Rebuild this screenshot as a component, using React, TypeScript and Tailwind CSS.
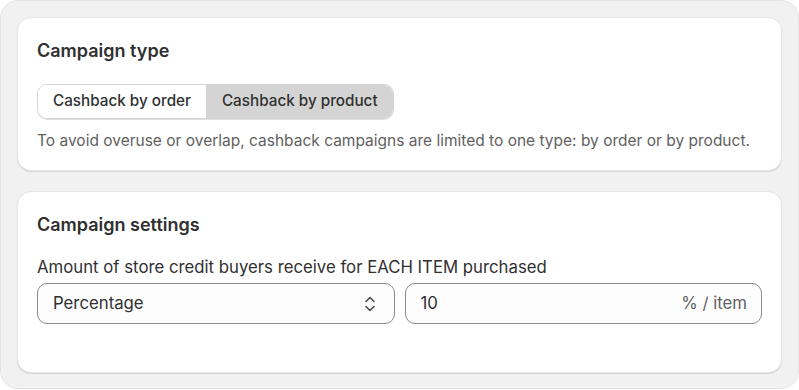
import React, { useState } from 'react';

function SelectArrows() {
  return (
    <svg width="14" height="20" viewBox="0 0 14 20" fill="none" className="text-[#4a4a4a]">
      <path d="M3 7.5L7 3.5L11 7.5" stroke="currentColor" strokeWidth="1.6" strokeLinecap="round" strokeLinejoin="round" />
      <path d="M3 12.5L7 16.5L11 12.5" stroke="currentColor" strokeWidth="1.6" strokeLinecap="round" strokeLinejoin="round" />
    </svg>
  );
}

export default function App() {
  const [type, setType] = useState<'order' | 'product'>('product');
  const [amount, setAmount] = useState('10');

  return (
    <div className="w-[799px] h-[390px] bg-white font-['Inter',sans-serif] text-[#303030]">
      <div className="w-[799px] h-[389px] rounded-[18px] border border-[#e3e3e3] bg-[#f1f1f1] p-4 pb-[15px] flex flex-col gap-[20px]">
        <div className="rounded-[14px] bg-white border border-[#e6e6e6] shadow-[0_1px_1px_rgba(0,0,0,0.12)] px-[19px] pt-[22px] pb-[18px]">
          <h2 className="text-[18px] font-semibold leading-[22px]">Campaign type</h2>
          <div className="mt-[22px] inline-flex rounded-[10px] border border-[#d4d4d4] shadow-[0_1px_0_rgba(0,0,0,0.12)] overflow-hidden">
            <button
              onClick={() => setType('order')}
              className={`h-[33px] px-[15px] text-[15.25px] font-medium ${type === 'order' ? 'bg-[#d4d4d4]' : 'bg-white'}`}
            >
              Cashback by order
            </button>
            <button
              onClick={() => setType('product')}
              className={`h-[33px] px-[15px] text-[15.25px] font-medium border-l border-[#d4d4d4] ${type === 'product' ? 'bg-[#d4d4d4]' : 'bg-white'}`}
            >
              Cashback by product
            </button>
          </div>
          <p className="mt-[11px] text-[15.5px] leading-[22px] text-[#616161]">
            To avoid overuse or overlap, cashback campaigns are limited to one type: by order or by product.
          </p>
        </div>

        <div className="flex-1 rounded-[14px] bg-white border border-[#e6e6e6] shadow-[0_1px_1px_rgba(0,0,0,0.12)] px-[19px] pt-[22px]">
          <h2 className="text-[18px] font-semibold leading-[22px]">Campaign settings</h2>
          <label className="block mt-[19px] text-[16.75px] leading-[24px]">
            Amount of store credit buyers receive for EACH ITEM purchased
          </label>
          <div className="mt-[4px] grid grid-cols-2 gap-[10px]">
            <div className="h-[41px] rounded-[10px] border border-[#8a8a8a] bg-[#fdfdfd] flex items-center justify-between pl-[15px] pr-[17px]">
              <span className="text-[16.75px]">Percentage</span>
              <SelectArrows />
            </div>
            <div className="h-[41px] rounded-[10px] border border-[#8a8a8a] bg-[#fdfdfd] flex items-center pl-[15px] pr-[14px]">
              <input
                value={amount}
                onChange={(e) => setAmount(e.target.value)}
                className="flex-1 min-w-0 bg-transparent text-[16.75px] outline-none"
              />
              <span className="text-[16.75px] text-[#616161]">% / item</span>
            </div>
          </div>
        </div>
      </div>
    </div>
  );
}
